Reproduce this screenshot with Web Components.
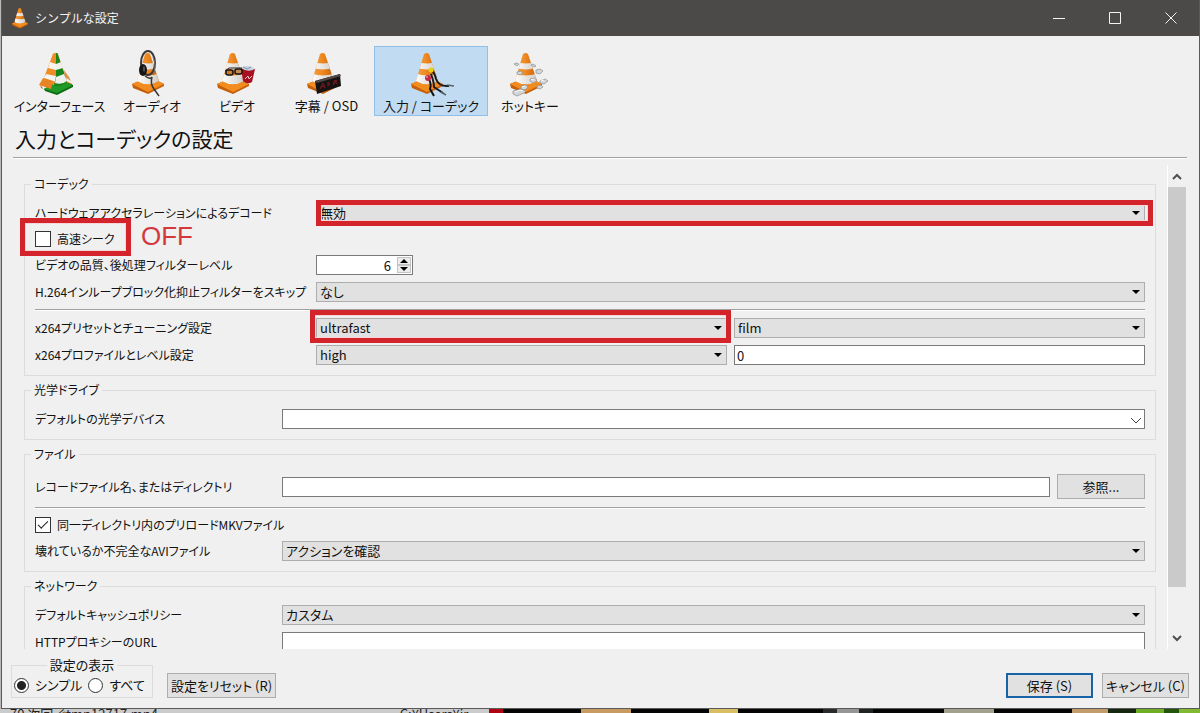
<!DOCTYPE html>
<html lang="ja">
<head>
<meta charset="utf-8">
<title>シンプルな設定</title>
<style>
    html, body {
        height: 100%;
        margin: 0;
    }

    body {
        font-family: "Noto Sans CJK JP", sans-serif;
        font-size: 13px;
        line-height: 16px;
        font-feature-settings: "palt";
        color: #111;
        overflow: hidden;
    }
</style>
</head>
<body>
<settings-window></settings-window>

<script>
const CONE_EXTRAS = {
    plain: '',
    interface: `
        <path d="M3 33L14 29L20 44L8 40Z" fill="#f0f0f0"/>
        <path d="M8 39L24 30L37 35L37 37L21 45L9 41Z" fill="#0d6b13"/>
        <path d="M8 39L24 30L37 35L21 43Z" fill="#1f9a26"/>
        <path d="M19 3L17 4L9 25L8 31L20 36L22 3Z" fill="#f08c26"/>
        <path d="M14 12L20 14V20L12 18ZM10 24L20 26V32L8 28Z" fill="#f6f4ef"/>
        <path d="M7 28L17 31L15 39L3 35Z" fill="#e98424"/>
        <path d="M20 3Q22 3 22 5L31 32Q26 37 18 36L20 26Z" fill="#16861c"/>
        <path d="M20 14L25 12L27 18L20 20ZM20 27L28 24L31 31Q26 35 19 33Z" fill="#edf1ea"/>
        <path d="M28 20L33 27L35 31L29 27Z" fill="#e08f48"/>`,
    audio: `
        <ellipse cx="20" cy="13" rx="7" ry="12" fill="none" stroke="#3b3835" stroke-width="2"/>
        <path d="M25 7Q29 17 25 25" fill="none" stroke="#77716b" stroke-width="1"/>
        <ellipse cx="15" cy="20" rx="4" ry="6" fill="#171717"/>
        <ellipse cx="16" cy="19" rx="1" ry="3" fill="#555"/>
        <path d="M17 26Q23 30 24 27Q22 34 26 39L31 46" fill="none" stroke="#393633" stroke-width="1.5"/>`,
    video: `
        <path d="M28 18L42 19L39 32Q34 35 30 31Z" fill="#a80f20"/>
        <path d="M28 18Q35 13 42 19Q35 23 28 18Z" fill="#c9d5e0"/>
        <path d="M30 17L34 19L38 17" fill="none" stroke="#8195aa"/>
        <path d="M32 29L35 26L36 29L39 26" fill="none" stroke="#f0c7cc"/>
        <rect x="13" y="20" width="7" height="5" rx="2" fill="#c87a3a" stroke="#171615" stroke-width="1.5"/>
        <rect x="22" y="19" width="7" height="5" rx="2" fill="#c08a50" stroke="#171615" stroke-width="1.5"/>
        <path d="M12 21L16 18L29 18" fill="none" stroke="#252323" stroke-width="1"/>`,
    subtitle: `
        <path d="M12 31L37 24L38 36L14 44Z" fill="#171313"/>
        <path d="M12 31L37 24L38 26L14 33Z" fill="#514847"/>
        <path d="M17 39L20 33L22 38M18 37L22 36M25 36V32L27 34L25 36ZM30 35L32 30L34 34M31 34L34 30" fill="none" stroke="#7c1a20"/>`,
    codec: `
        <path d="M24 20Q28 23 29 29Q32 37 42 36" fill="none" stroke="#171b1d" stroke-width="2"/>
        <path d="M24 24Q27 32 27 37L36 43" fill="none" stroke="#1b1d20" stroke-width="2"/>
        <path d="M21 28Q25 33 23 39L27 46" fill="none" stroke="#0f1213" stroke-width="2"/>
        <path d="M40 35L47 36M34 42L39 45" stroke="#596267" stroke-width="1.5"/>
        <circle cx="24" cy="20" r="2.5" fill="#e4d315"/>
        <circle cx="21" cy="28" r="3" fill="#c32743"/>
        <circle cx="20" cy="27" r="1" fill="#e98b9c"/>`,
    hotkeys: `
        <g fill="#d3d5d6" stroke="#8b8f90" stroke-width=".7">
            <path d="M8 14L10 13L13 14L11 16Z"/>
            <path d="M25 15L27 14L30 16L28 17Z"/>
            <path d="M11 22L15 21L17 23L14 25L11 24Z"/>
            <path d="M30 20L34 19L37 21L34 24L30 23Z"/>
            <path d="M24 29L28 28L31 30L28 33L24 31Z"/>
            <path d="M34 31L39 29L42 31L38 34L34 33Z"/>
            <path d="M15 36L20 35L22 37L19 40L15 39Z"/>
            <path d="M7 41L15 39L20 41L18 43L11 46L7 44Z"/>
            <path d="M31 36L35 35L37 37L34 39L31 38Z"/>
        </g>
        <path d="M9 42L14 40L17 41M25 30L28 29M35 31L38 30M16 37L19 36" fill="none" stroke="#fafafa"/>`
}

class ConeIcon extends HTMLElement {
    constructor() {
        super()
        this.attachShadow({ mode: 'open' })
    }

    connectedCallback() {
        const kind = this.getAttribute('kind') || 'plain'
        const box = kind === 'plain' ? '2 1 36 44' : '0 0 48 48'
        this.shadowRoot.innerHTML = `
            <style>
                :host {
                    display: block;
                    width: 48px;
                    height: 48px;
                }

                svg {
                    display: block;
                    width: 100%;
                    height: 100%;
                }
            </style>
            <svg viewBox="${box}" aria-hidden="true">
                <defs>
                    <linearGradient id="orange">
                        <stop offset="0" stop-color="#f2a145"/>
                        <stop offset=".45" stop-color="#ef8a22"/>
                        <stop offset="1" stop-color="#c45d0b"/>
                    </linearGradient>
                    <linearGradient id="white">
                        <stop offset="0" stop-color="#fff"/>
                        <stop offset="1" stop-color="#cfcbc5"/>
                    </linearGradient>
                    <clipPath id="body"><path d="M17 4Q20 2 22 4L31 31Q20 38 9 31Z"/></clipPath>
                </defs>
                <path d="M4 34L18 28L24 28L36 34L36 36L20 44L5 38Z" fill="#c4600c"/>
                <path d="M4 34L18 28L24 28L36 34L20 42Z" fill="#f28c1e"/>
                <g clip-path="url(#body)">
                    <rect x="8" width="24" height="36" fill="url(#orange)"/>
                    <path d="M8 11Q20 16 32 11V17Q20 22 8 17Z" fill="url(#white)"/>
                    <path d="M8 23Q20 28 32 23V31Q20 38 8 31Z" fill="url(#white)"/>
                </g>
                ${CONE_EXTRAS[kind]}
            </svg>
        `
    }
}

class TitleBar extends HTMLElement {
    constructor() {
        super()
        this.attachShadow({ mode: 'open' })
    }

    connectedCallback() {
        this.shadowRoot.innerHTML = `
            <style>
                :host {
                    display: flex;
                    align-items: center;
                    height: 36px;
                    padding-left: 9px;
                    background: #4b4a48;
                    color: #f4f4f4;
                    font-size: 12px;
                    font-feature-settings: normal;
                }

                cone-icon {
                    width: 18px;
                    height: 22px;
                    margin-right: 6px;
                }

                .caption {
                    flex: 1;
                }

                button {
                    width: 56px;
                    height: 36px;
                    padding: 0;
                    border: none;
                    background: none;
                    color: inherit;
                }

                svg {
                    display: block;
                    margin: 0 auto;
                    fill: none;
                    stroke: currentColor;
                }
            </style>
            <cone-icon></cone-icon>
            <span class="caption"><slot></slot></span>
            <button aria-label="最小化"><svg width="12" height="12"><path d="M0 6.500H12"/></svg></button>
            <button aria-label="最大化"><svg width="12" height="12"><path d="M.5.5H11.500V11.500H.5Z"/></svg></button>
            <button aria-label="閉じる"><svg width="12" height="12"><path d="M.5.5L11.500 11.500M11.500.5L.5 11.500"/></svg></button>
        `
    }
}

class CategoryTab extends HTMLElement {
    constructor() {
        super()
        this.attachShadow({ mode: 'open' })
    }

    connectedCallback() {
        this.shadowRoot.innerHTML = `
            <style>
                :host {
                    display: block;
                }

                button {
                    display: flex;
                    flex-direction: column;
                    align-items: center;
                    box-sizing: border-box;
                    width: 100%;
                    height: 70px;
                    padding: 3px 0 0;
                    border: 1px solid transparent;
                    background: none;
                    color: inherit;
                    font: inherit;
                    font-feature-settings: inherit;
                    white-space: nowrap;
                }

                :host([selected]) button {
                    border-color: #90c0e8;
                    background: #c1dcf2;
                }
            </style>
            <button aria-pressed="${this.hasAttribute('selected')}">
                <cone-icon kind="${this.getAttribute('icon')}"></cone-icon>
                <slot></slot>
            </button>
        `
    }
}

class SettingsGroup extends HTMLElement {
    constructor() {
        super()
        this.attachShadow({ mode: 'open' })
    }

    connectedCallback() {
        this.shadowRoot.innerHTML = `
            <style>
                :host {
                    display: block;
                    font-size: 12px;
                }

                fieldset {
                    min-width: 0;
                    margin: 0;
                    padding: 11px 10px 10px;
                    border: 1px solid #dcdcdc;
                }

                legend {
                    margin-left: -4px;
                    padding: 0 3px;
                }

                .rows {
                    display: flex;
                    flex-direction: column;
                    gap: 7px;
                }

                ::slotted(hr) {
                    width: 100%;
                    height: 1px;
                    margin: 0;
                    border: none;
                    border-top: 1px solid #a0a0a0;
                    background: #fff;
                }
            </style>
            <fieldset>
                <legend>${this.getAttribute('legend')}</legend>
                <div class="rows"><slot></slot></div>
            </fieldset>
        `
    }
}

// One line of the form: label column first, then the controls share the rest.
class FormRow extends HTMLElement {
    constructor() {
        super()
        this.attachShadow({ mode: 'open' })
    }

    connectedCallback() {
        this.shadowRoot.innerHTML = `
            <style>
                :host {
                    display: grid;
                    position: relative;
                    grid-template-columns: var(--label-width, 240px) minmax(0, 1fr);
                    column-gap: 7px;
                    align-items: center;
                    min-height: 20px;
                }

                :host([split]) {
                    grid-template-columns: var(--label-width) 1fr 1fr;
                }

                :host([browse]) {
                    grid-template-columns: var(--label-width, 240px) 1fr 88px;
                    min-height: 27px;
                }
            </style>
            <slot></slot>
        `
    }
}

const FIELD_STYLE = `
    :host {
        display: contents;
    }

    label {
        white-space: nowrap;
    }

    .box {
        display: flex;
        position: relative;
    }

    select, input {
        box-sizing: border-box;
        width: 100%;
        height: 20px;
        margin: 0;
        padding: 0 3px;
        border: 1px solid #adadad;
        border-radius: 0;
        background: #e1e1e1;
        color: #111;
        font: inherit;
        font-size: 13px;
        font-feature-settings: inherit;
        line-height: 16px;
        appearance: none;
    }

    input, select.editable {
        border-color: #7a7a7a;
        background: #fff;
    }

    input {
        padding: 0 2px;
    }

    svg {
        position: absolute;
        right: 4px;
        top: 8px;
        pointer-events: none;
    }
`

class SelectField extends HTMLElement {
    constructor() {
        super()
        this.attachShadow({ mode: 'open' })
    }

    connectedCallback() {
        const label = this.getAttribute('label')
        const editable = this.hasAttribute('editable')
        const arrow = editable
            ? '<path d="M0 1L5 6L10 1" fill="none" stroke="#444"/>'
            : '<path d="M1 0H9L5 4Z" fill="#000"/>'
        this.shadowRoot.innerHTML = `
            <style>${FIELD_STYLE}</style>
            ${label ? `<label for="field">${label}</label>` : ''}
            <div class="box">
                <select id="field" class="${editable ? 'editable' : ''}" ${label ? '' : `aria-label="${this.getAttribute('hint')}"`}>
                    <option>${this.getAttribute('value') || ''}</option>
                </select>
                <svg width="10" height="7" aria-hidden="true">${arrow}</svg>
            </div>
        `
    }
}

class TextField extends HTMLElement {
    constructor() {
        super()
        this.attachShadow({ mode: 'open' })
    }

    connectedCallback() {
        const label = this.getAttribute('label')
        this.shadowRoot.innerHTML = `
            <style>${FIELD_STYLE}</style>
            ${label ? `<label for="field">${label}</label>` : ''}
            <div class="box">
                <input id="field" type="text" value="${this.getAttribute('value') || ''}" ${label ? '' : `aria-label="${this.getAttribute('hint')}"`}>
            </div>
        `
    }
}

class SpinField extends HTMLElement {
    constructor() {
        super()
        this.attachShadow({ mode: 'open' })
    }

    connectedCallback() {
        this.shadowRoot.innerHTML = `
            <style>
                ${FIELD_STYLE}

                .box {
                    box-sizing: border-box;
                    width: 97px;
                    height: 20px;
                    border: 1px solid #7a7a7a;
                    background: #fff;
                }

                input {
                    flex: 1;
                    min-width: 0;
                    height: 18px;
                    padding: 0 5px;
                    border: none;
                    text-align: right;
                    appearance: textfield;
                }

                input::-webkit-inner-spin-button {
                    display: none;
                }

                .steps {
                    display: flex;
                    flex-direction: column;
                    width: 14px;
                    padding: 1px;
                }

                button {
                    flex: 1;
                    min-height: 0;
                    padding: 0;
                    border: 1px solid #c4c4c4;
                    background: #ececec;
                }

                button svg {
                    position: static;
                    display: block;
                    margin: 0 auto;
                }
            </style>
            <label for="field">${this.getAttribute('label')}</label>
            <div class="box">
                <input id="field" type="number" value="${this.getAttribute('value')}">
                <div class="steps">
                    <button aria-label="増やす"><svg width="8" height="4"><path d="M0 4L4 0L8 4Z"/></svg></button>
                    <button aria-label="減らす"><svg width="8" height="4"><path d="M0 0L4 4L8 0Z"/></svg></button>
                </div>
            </div>
        `
    }
}

class CheckField extends HTMLElement {
    constructor() {
        super()
        this.attachShadow({ mode: 'open' })
    }

    connectedCallback() {
        this.shadowRoot.innerHTML = `
            <style>
                :host {
                    display: flex;
                    position: relative;
                    height: 18px;
                }

                label {
                    display: flex;
                    align-items: center;
                    gap: 6px;
                    white-space: nowrap;
                }

                input {
                    display: grid;
                    place-items: center;
                    box-sizing: border-box;
                    width: 16px;
                    height: 16px;
                    margin: 0;
                    border: 1px solid #333;
                    background: #fff;
                    appearance: none;
                }

                input:checked::before {
                    content: "";
                    width: 9px;
                    height: 4px;
                    margin-bottom: 3px;
                    border: solid #222;
                    border-width: 0 0 1px 1px;
                    transform: rotate(-45deg);
                }
            </style>
            <label>
                <input type="checkbox" ${this.hasAttribute('checked') ? 'checked' : ''}>
                ${this.getAttribute('label')}
            </label>
            <slot></slot>
        `
    }
}

class PushButton extends HTMLElement {
    constructor() {
        super()
        this.attachShadow({ mode: 'open' })
    }

    connectedCallback() {
        this.shadowRoot.innerHTML = `
            <style>
                :host {
                    display: block;
                    min-width: 87px;
                    font-size: 13px;
                }

                button {
                    box-sizing: border-box;
                    width: 100%;
                    height: 25px;
                    padding: 0 2px;
                    border: 1px solid #adadad;
                    background: #e1e1e1;
                    color: inherit;
                    font: inherit;
                    font-feature-settings: inherit;
                    white-space: nowrap;
                }

                :host([primary]) button {
                    border: 2px solid #1763a6;
                }
            </style>
            <button><slot></slot></button>
        `
    }
}

class ViewMode extends HTMLElement {
    constructor() {
        super()
        this.attachShadow({ mode: 'open' })
    }

    connectedCallback() {
        this.shadowRoot.innerHTML = `
            <style>
                :host {
                    display: block;
                }

                fieldset {
                    display: flex;
                    box-sizing: border-box;
                    width: 142px;
                    height: 41px;
                    margin: 0;
                    padding: 4px 2px 0;
                    gap: 6px;
                    border: 1px solid #dcdcdc;
                }

                legend {
                    margin: 0 auto;
                    padding: 0 3px;
                }

                label {
                    display: flex;
                    align-items: center;
                    height: 16px;
                    gap: 6px;
                    white-space: nowrap;
                }

                input {
                    box-sizing: border-box;
                    width: 15px;
                    height: 15px;
                    margin: 0;
                    border: 1px solid #333;
                    border-radius: 50%;
                    background: #fff;
                    appearance: none;
                }

                input:checked {
                    background: radial-gradient(circle, #222 4px, #fff 5px);
                }
            </style>
            <fieldset>
                <legend>設定の表示</legend>
                <label><input type="radio" name="mode" checked>シンプル</label>
                <label><input type="radio" name="mode">すべて</label>
            </fieldset>
        `
    }
}

// Red marker laid over the form; its edges come from the --inset of the user.
class MarkFrame extends HTMLElement {
    constructor() {
        super()
        this.attachShadow({ mode: 'open' })
    }

    connectedCallback() {
        this.shadowRoot.innerHTML = `
            <style>
                :host {
                    position: absolute;
                    z-index: 1;
                    inset: var(--inset);
                    box-sizing: border-box;
                    width: var(--width, auto);
                    border: 5px solid #d3232b;
                    box-shadow: inset 0 0 0 1px #f8d4d6;
                    pointer-events: none;
                }

                ::slotted(span) {
                    position: absolute;
                    left: 100%;
                    top: 0;
                    margin-left: 15px;
                    color: #d2383c;
                    font: 26px/26px "Liberation Sans", sans-serif;
                }
            </style>
            <slot></slot>
        `
    }
}

class ScrollPane extends HTMLElement {
    constructor() {
        super()
        this.attachShadow({ mode: 'open' })
    }

    connectedCallback() {
        this.shadowRoot.innerHTML = `
            <style>
                :host {
                    display: flex;
                    min-height: 0;
                    overflow: hidden;
                }

                .view {
                    flex: 1;
                    display: flex;
                    flex-direction: column;
                    gap: 6px;
                    padding: 17px 11px 0;
                }

                .bar {
                    display: flex;
                    flex-direction: column;
                    align-items: center;
                    width: 18px;
                    margin-top: 6px;
                    border-left: 1px solid #fff;
                }

                .bar svg {
                    flex: none;
                    width: 12px;
                    height: 22px;
                    fill: none;
                    stroke: #505050;
                    stroke-width: 2;
                }

                .track {
                    flex: 1;
                    width: 100%;
                }

                .thumb {
                    height: 91%;
                    background: #cacaca;
                }
            </style>
            <div class="view"><slot></slot></div>
            <div class="bar" aria-hidden="true">
                <svg viewBox="0 0 12 22"><path d="M2 14L6 10L10 14"/></svg>
                <div class="track"><div class="thumb"></div></div>
                <svg viewBox="0 0 12 22"><path d="M2 9L6 13L10 9"/></svg>
            </div>
        `
    }
}

// The slice of desktop that shows under the window.
class DesktopEdge extends HTMLElement {
    constructor() {
        super()
        this.attachShadow({ mode: 'open' })
    }

    connectedCallback() {
        this.shadowRoot.innerHTML = `
            <style>
                :host {
                    display: flex;
                    height: 4px;
                    overflow: hidden;
                    color: #222;
                    font-size: 13px;
                    line-height: 10px;
                    background: #000;
                }

                span {
                    flex: 393;
                    box-sizing: border-box;
                    height: 10px;
                    padding-left: 10px;
                    background: #cbcbcb;
                    white-space: nowrap;
                }

                span + span {
                    flex: 90;
                    padding-left: 0;
                }

                i {
                    flex: 717;
                    background: linear-gradient(90deg,
                        #b00313 0 2%, #050505 2% 13%, #c89b63 13% 20%, #050505 20% 31%,
                        #d8bf63 31% 35%, #050505 35% 47%, #272b2b 47% 49%, #969696 49% 52%,
                        #202323 52% 54%, #050505 54% 64%, #a1a18d 64% 71%, #050505 71% 82%,
                        #c49c6c 82% 87%, #172810 87% 91%, #70ae25 91% 95%, #24550f 95% 97%, #83b930 97%);
                }
            </style>
            <span>70 次回 ぐtmp12717.mp4</span><span>C:¥Users¥ir</span><i></i>
        `
    }
}

class SettingsWindow extends HTMLElement {
    constructor() {
        super()
        this.attachShadow({ mode: 'open' })
    }

    connectedCallback() {
        this.#render()
    }

    #render() {
        this.shadowRoot.innerHTML = `
            <style>
                :host {
                    display: flex;
                    flex-direction: column;
                    height: 100vh;
                    background: #b9b9b9;
                }

                main {
                    flex: 1;
                    display: flex;
                    flex-direction: column;
                    min-height: 0;
                    margin-left: 1px;
                    border: solid #5a5a5a;
                    border-width: 0 1px 1px;
                    background: #f0f0f0;
                }

                nav {
                    display: grid;
                    grid-template-columns: 99px 86px 84px 95px 114px 84px;
                    margin: 10px 8px 0 8px;
                }

                h1 {
                    margin: 6px 12px 0 11px;
                    padding: 0 2px 3px;
                    border-bottom: 1px solid #a0a0a0;
                    box-shadow: 0 1px #fff;
                    font-size: 21px;
                    line-height: 32px;
                    font-weight: 400;
                }

                scroll-pane {
                    flex: 1;
                    margin: 1px 13px 0 11px;
                }

                .codec {
                    --label-width: 274px;
                }

                footer {
                    display: flex;
                    align-items: flex-end;
                    gap: 9px;
                    padding: 8px 10px 10px 9px;
                }

                .spacer {
                    flex: 1;
                }

                .reset {
                    min-width: 109px;
                    margin-left: 5px;
                }
            </style>
            <main>
                <title-bar>シンプルな設定</title-bar>
                <nav>
                    <category-tab icon="interface">インターフェース</category-tab>
                    <category-tab icon="audio">オーディオ</category-tab>
                    <category-tab icon="video">ビデオ</category-tab>
                    <category-tab icon="subtitle">字幕 / OSD</category-tab>
                    <category-tab icon="codec" selected>入力 / コーデック</category-tab>
                    <category-tab icon="hotkeys">ホットキー</category-tab>
                </nav>
                <h1>入力とコーデックの設定</h1>
                <scroll-pane>
                    <settings-group class="codec" legend="コーデック">
                        <form-row>
                            <select-field label="ハードウェアアクセラレーションによるデコード" value="無効"></select-field>
                            <mark-frame style="--inset: -3px -8px -3px 281px"></mark-frame>
                        </form-row>
                        <check-field label="高速シーク">
                            <mark-frame style="--inset: -12px auto -8px -15px; --width: 111px"><span>OFF</span></mark-frame>
                        </check-field>
                        <form-row>
                            <spin-field label="ビデオの品質、後処理フィルターレベル" value="6"></spin-field>
                        </form-row>
                        <form-row>
                            <select-field label="H.264インループブロック化抑止フィルターをスキップ" value="なし"></select-field>
                        </form-row>
                        <hr>
                        <form-row split>
                            <select-field label="x264プリセットとチューニング設定" value="ultrafast"></select-field>
                            <select-field hint="チューニング" value="film"></select-field>
                            <mark-frame style="--inset: -8px calc(50% - 141px) -5px 275px"></mark-frame>
                        </form-row>
                        <form-row split>
                            <select-field label="x264プロファイルとレベル設定" value="high"></select-field>
                            <text-field hint="レベル" value="0"></text-field>
                        </form-row>
                    </settings-group>
                    <settings-group legend="光学ドライブ">
                        <form-row>
                            <select-field label="デフォルトの光学デバイス" editable></select-field>
                        </form-row>
                    </settings-group>
                    <settings-group legend="ファイル">
                        <form-row browse>
                            <text-field label="レコードファイル名、またはディレクトリ"></text-field>
                            <push-button>参照...</push-button>
                        </form-row>
                        <hr>
                        <check-field label="同一ディレクトリ内のプリロードMKVファイル" checked></check-field>
                        <form-row>
                            <select-field label="壊れているか不完全なAVIファイル" value="アクションを確認"></select-field>
                        </form-row>
                    </settings-group>
                    <settings-group legend="ネットワーク">
                        <form-row>
                            <select-field label="デフォルトキャッシュポリシー" value="カスタム"></select-field>
                        </form-row>
                        <form-row>
                            <text-field label="HTTPプロキシーのURL"></text-field>
                        </form-row>
                    </settings-group>
                </scroll-pane>
                <footer>
                    <view-mode></view-mode>
                    <push-button class="reset">設定をリセット (R)</push-button>
                    <span class="spacer"></span>
                    <push-button primary>保存 (S)</push-button>
                    <push-button>キャンセル (C)</push-button>
                </footer>
            </main>
            <desktop-edge></desktop-edge>
        `
    }
}

customElements.define('cone-icon', ConeIcon)
customElements.define('title-bar', TitleBar)
customElements.define('category-tab', CategoryTab)
customElements.define('settings-group', SettingsGroup)
customElements.define('form-row', FormRow)
customElements.define('select-field', SelectField)
customElements.define('text-field', TextField)
customElements.define('spin-field', SpinField)
customElements.define('check-field', CheckField)
customElements.define('push-button', PushButton)
customElements.define('view-mode', ViewMode)
customElements.define('mark-frame', MarkFrame)
customElements.define('scroll-pane', ScrollPane)
customElements.define('desktop-edge', DesktopEdge)
customElements.define('settings-window', SettingsWindow)
</script>
</body>
</html>
